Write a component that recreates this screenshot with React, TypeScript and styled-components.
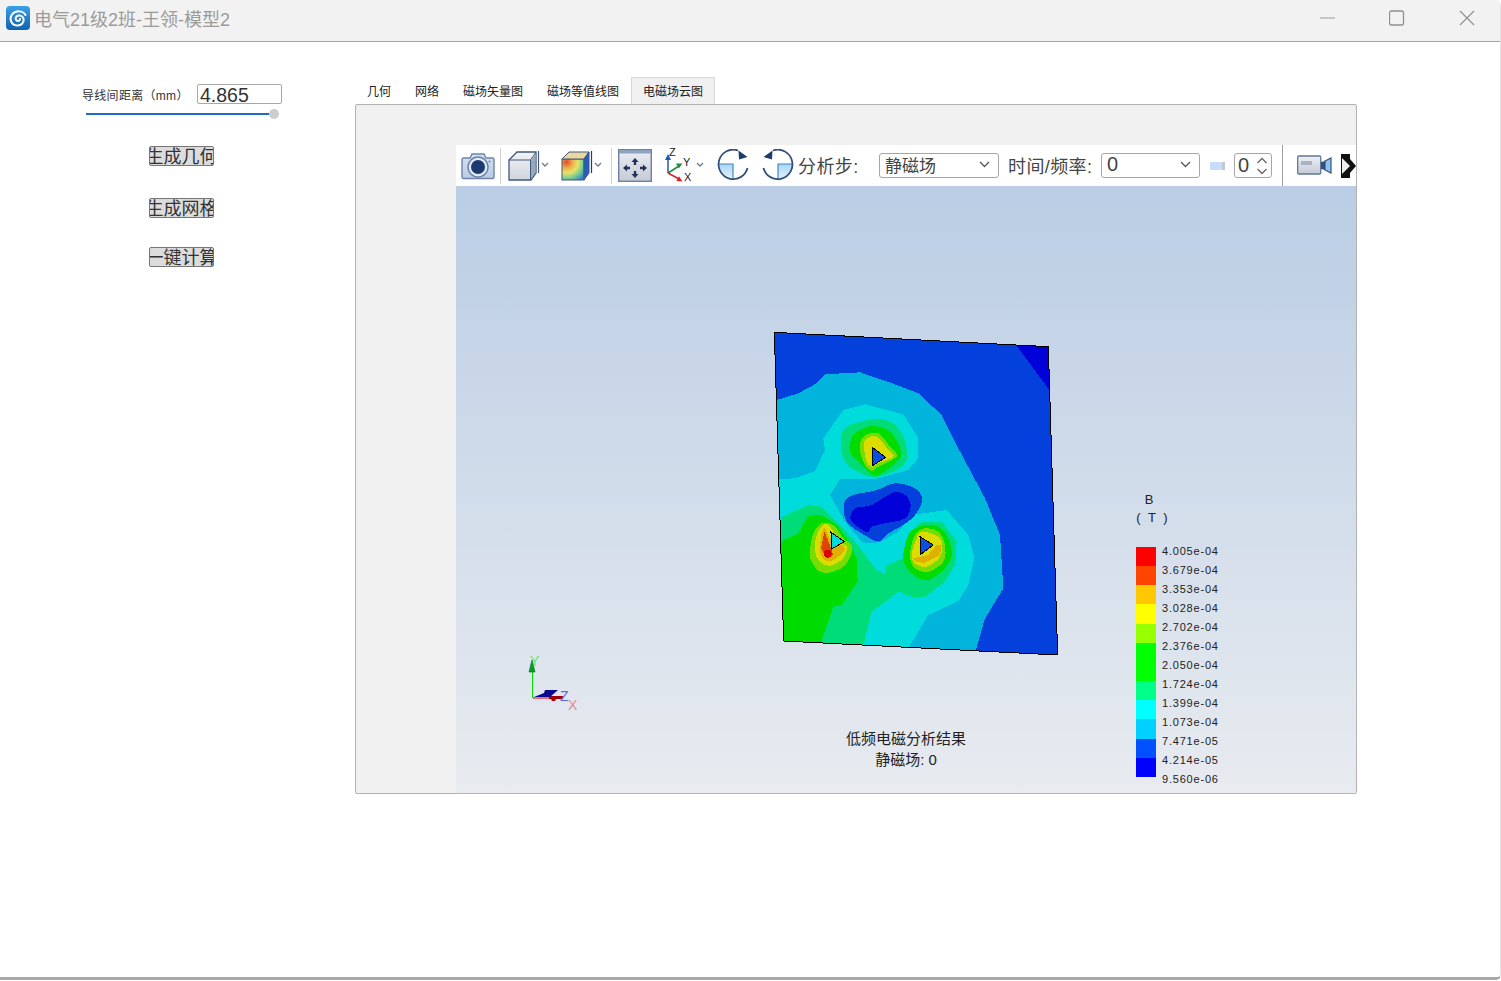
import React from 'react';
import styled, { createGlobalStyle } from 'styled-components';

const ui = '"Liberation Sans", "Noto Sans CJK SC", sans-serif';

const GlobalStyle = createGlobalStyle`
  html, body {
    margin: 0;
    padding: 0;
    background: #fff;
    overflow: hidden;
  }
  * {
    box-sizing: border-box;
  }
`;

const Window = styled.div`
  height: 980px;
  display: flex;
  flex-direction: column;
  font-family: ${ui};
  background: #fff;
  border-bottom: 3px solid #a8a8a8;
  border-right: 1px solid #e4e4e4;
  border-radius: 0 6px 5px 0;
  overflow: hidden;
`;

const TitleBar = styled.header`
  height: 42px;
  flex: none;
  display: flex;
  align-items: center;
  padding: 0 25px 5px 6px;
  background: #f2f2f2;
  border-bottom: 1px solid #a3a3a3;
`;

const Title = styled.h1`
  margin: -1px 0 0 4px;
  font-size: 18px;
  font-weight: 400;
  color: #9a9a9a;
  flex: 1;
  white-space: nowrap;
`;

const WinControls = styled.div`
  display: flex;
  align-items: center;
  gap: 54px;
`;

const Main = styled.main`
  flex: 1;
  display: flex;
  min-height: 0;
`;

const SidePanel = styled.aside`
  width: 355px;
  flex: none;
  padding: 42px 0 0 82px;
`;

const ParamRow = styled.div`
  display: flex;
  align-items: center;
  height: 20px;
`;

const ParamLabel = styled.label`
  width: 115px;
  font-size: 12px;
  letter-spacing: 0.3px;
  color: #333;
  white-space: nowrap;
`;

const ParamInput = styled.input`
  width: 85px;
  height: 20px;
  padding: 2px 0 0 2px;
  border: 1px solid #a8a8a8;
  border-radius: 2px;
  font: 19.5px ${ui};
  color: #333;
  background: #fff;
  outline: none;
`;

const SliderTrack = styled.div`
  position: relative;
  width: 188px;
  height: 2px;
  margin: 9px 0 0 4px;
  background: #1b6ec2;
`;

const SliderKnob = styled.span`
  position: absolute;
  right: -5px;
  top: -4px;
  width: 10px;
  height: 10px;
  border-radius: 50%;
  background: #cdcdcd;
`;

const ActionStack = styled.div`
  display: flex;
  flex-direction: column;
  align-items: flex-start;
  margin-left: 67px;
`;

const ActionButton = styled.button<{ $top: number }>`
  width: 65px;
  height: 20px;
  margin-top: ${(p) => p.$top}px;
  padding: 1px 0 0;
  display: flex;
  justify-content: center;
  align-items: center;
  overflow: hidden;
  white-space: nowrap;
  font: 18px ${ui};
  line-height: 18px;
  color: #333;
  background: #dcdcdc;
  border: 1px solid #777;
  border-radius: 2px;
`;

const Workspace = styled.section`
  flex: none;
  width: 1002px;
  padding-top: 35px;
`;

const TabBar = styled.nav`
  display: flex;
  height: 27px;
`;

const Tab = styled.div<{ $active?: boolean }>`
  padding: 0 11px 2px;
  display: flex;
  align-items: center;
  font-size: 12px;
  color: #222;
  background: ${(p) => (p.$active ? '#f0f0f0' : 'transparent')};
  border: 1px solid ${(p) => (p.$active ? '#d8d8d8' : 'transparent')};
  border-width: 1px 1px 0;
`;

const TabPanel = styled.div`
  height: 690px;
  padding: 40px 0 0 100px;
  background: #f0f0f0;
  border: 1px solid #b2b2b2;
  border-radius: 2px;
`;

const Viewer = styled.div`
  height: 648px;
  display: flex;
  flex-direction: column;
`;

const Toolbar = styled.div`
  height: 41px;
  flex: none;
  display: flex;
  align-items: center;
  background: #fff;
  overflow: hidden;
  font-size: 18px;
  color: #444;
`;

const ToolSlot = styled.div<{ $ml: number; $w: number }>`
  flex: none;
  display: flex;
  margin-left: ${(p) => p.$ml}px;
  width: ${(p) => p.$w}px;
`;

const ToolDivider = styled.span<{ $ml: number; $tall?: boolean }>`
  flex: none;
  width: 1px;
  height: ${(p) => (p.$tall ? 41 : 36)}px;
  margin-left: ${(p) => p.$ml}px;
  background: ${(p) => (p.$tall ? '#a0a0a0' : '#cfcfcf')};
`;

const ToolLabel = styled.span<{ $ml: number; $w: number }>`
  flex: none;
  margin-left: ${(p) => p.$ml}px;
  margin-top: -2px;
  width: ${(p) => p.$w}px;
  letter-spacing: 0.4px;
  white-space: nowrap;
`;

const Combo = styled.div<{ $ml: number; $w: number }>`
  flex: none;
  display: flex;
  align-items: center;
  justify-content: space-between;
  height: 25px;
  margin-left: ${(p) => p.$ml}px;
  width: ${(p) => p.$w}px;
  padding: 0 8px 2px 5px;
  border: 1px solid #a6a6a6;
  border-radius: 3px;
  font-size: 17px;
  color: #444;
  background: #fff;
`;

const NumberText = styled.span`
  font-size: 20px;
`;

const Spin = styled(Combo)`
  padding: 0 3px 0 3px;
`;

const Thumb = styled.span`
  flex: none;
  width: 15px;
  height: 8px;
  margin-left: 10px;
  background: linear-gradient(90deg, #c9ddf8 82%, #c4c8ce 82%);
`;

const Canvas = styled.div`
  position: relative;
  flex: 1;
  background: linear-gradient(#bacde4, #e8ebf0);
  overflow: hidden;
`;

const PlateSvg = styled.svg`
  position: absolute;
  left: 309px;
  top: 139px;
  width: 300px;
  height: 340px;
`;

const TriadSvg = styled.svg`
  position: absolute;
  left: 54px;
  top: 454px;
  width: 90px;
  height: 80px;
`;

const LegendTitle = styled.div`
  position: absolute;
  left: 672px;
  top: 305px;
  width: 50px;
  text-align: center;
  font-size: 13px;
  line-height: 18px;
  letter-spacing: 2px;
  color: #222;
  white-space: pre;
`;

const Legend = styled.div`
  position: absolute;
  left: 680px;
  top: 361px;
  display: flex;
  gap: 6px;
`;

const LegendBar = styled.div`
  width: 20px;
  display: flex;
  flex-direction: column;
`;

const LegendCell = styled.span<{ $color: string }>`
  height: 19.17px;
  background: ${(p) => p.$color};
`;

const LegendLabels = styled.div`
  display: flex;
  flex-direction: column;
  margin-top: -3px;
`;

const LegendLabel = styled.span`
  height: 19px;
  line-height: 14px;
  font-size: 11px;
  letter-spacing: 0.8px;
  color: #222;
`;

const Caption = styled.div`
  position: absolute;
  left: 300px;
  top: 543px;
  width: 300px;
  text-align: center;
  font-size: 15px;
  line-height: 20.5px;
  color: #222;
`;

const SwirlLogo = () => (
  <svg width="24" height="24" viewBox="0 0 24 24">
    <defs>
      <linearGradient id="logoBg" x1="0" y1="0" x2="0" y2="1">
        <stop offset="0" stopColor="#3aa0e8" />
        <stop offset="1" stopColor="#0f62b0" />
      </linearGradient>
    </defs>
    <rect width="24" height="24" rx="4" fill="url(#logoBg)" />
    <path
      d="M19.500 9C17 4.500 9.500 4 6 8.500C3 12.500 5 19 11 19.500C15.500 20 18.500 16 17.500 12.500C16.500 9.500 12.500 8.500 10.500 10.500C9 12 9.500 14.500 11.500 15C13 15.300 14 14.200 14 13"
      fill="none"
      stroke="#fff"
      strokeWidth="2"
      strokeLinecap="round"
    />
  </svg>
);

const MinimizeIcon = () => (
  <svg width="16" height="16" viewBox="0 0 16 16">
    <path d="M1 8h15" stroke="#9a9a9a" strokeWidth="1" />
  </svg>
);

const MaximizeIcon = () => (
  <svg width="16" height="16" viewBox="0 0 16 16">
    <rect x="0.500" y="1" width="14" height="14" rx="2" fill="none" stroke="#8e8e8e" strokeWidth="1.300" />
  </svg>
);

const CloseIcon = () => (
  <svg width="16" height="16" viewBox="0 0 16 16">
    <path d="M1 1l14 14M15 1L1 15" stroke="#8e8e8e" strokeWidth="1.100" />
  </svg>
);

const CameraIcon = () => (
  <svg width="34" height="28" viewBox="0 0 34 28">
    <defs>
      <linearGradient id="camBody" x1="0" y1="0" x2="0" y2="1">
        <stop offset="0" stopColor="#d6e2f2" />
        <stop offset="1" stopColor="#b9cbe4" />
      </linearGradient>
    </defs>
    <path
      d="M2.500 6H9l2-4h12l2 4h6.500A1.500 1.500 0 0 1 33 7.500V25a1.500 1.500 0 0 1-1.500 1.500h-29A1.500 1.500 0 0 1 1 25V7.500A1.500 1.500 0 0 1 2.500 6z"
      fill="url(#camBody)"
      stroke="#6d84a6"
      strokeWidth="1.400"
    />
    <circle cx="17" cy="15" r="10" fill="#e3ebf6" stroke="#6d84a6" strokeWidth="1.500" />
    <circle cx="17" cy="15" r="7" fill="#1c3a70" />
    <circle cx="28.500" cy="9.500" r="1" fill="#6d84a6" />
  </svg>
);

const Chevron = ({ x, y }: { x: number; y: number }) => (
  <path d={`M${x} ${y}l3 3 3-3`} fill="none" stroke="#6b7a90" strokeWidth="1.300" />
);

const CubeIcon = () => (
  <svg width="44" height="32" viewBox="0 0 44 32">
    <defs>
      <linearGradient id="cubeFace" x1="0" y1="0" x2="0" y2="1">
        <stop offset="0" stopColor="#f2f3f6" />
        <stop offset="1" stopColor="#cfd3db" />
      </linearGradient>
    </defs>
    <path d="M1 10L9 2h19v21l-5 7H1z" fill="url(#cubeFace)" stroke="#42587c" strokeWidth="1.300" />
    <path d="M22.500 10H1M22.500 10L28 2M22.500 10v20" stroke="#42587c" strokeWidth="1" fill="none" />
    <path d="M23 10.500L27.500 4v19L23 29z" fill="#9aa6ba" />
    <path d="M30.500 1v22" stroke="#42587c" strokeWidth="1.200" />
    <Chevron x={34} y={13} />
  </svg>
);

const ColorCubeIcon = () => (
  <svg width="44" height="32" viewBox="0 0 44 32">
    <defs>
      <radialGradient id="heat" cx="0.2" cy="0.15" r="1.050">
        <stop offset="0" stopColor="#e04a30" />
        <stop offset="0.28" stopColor="#eeb24a" />
        <stop offset="0.5" stopColor="#e8e26a" />
        <stop offset="0.72" stopColor="#7ed08a" />
        <stop offset="1" stopColor="#2f7fd0" />
      </radialGradient>
    </defs>
    <rect x="1" y="9" width="22" height="21" fill="url(#heat)" stroke="#42587c" strokeWidth="1" />
    <path d="M1 9l7-7h20l-5 7z" fill="#e8d8a0" stroke="#42587c" strokeWidth="1" />
    <path d="M23 9l5-7v21l-5 7z" fill="#1f5fc4" stroke="#42587c" strokeWidth="1" />
    <path d="M30.500 1v22" stroke="#1c3a9a" strokeWidth="1.200" />
    <Chevron x={34} y={13} />
  </svg>
);

const FitIcon = () => (
  <svg width="34" height="33" viewBox="0 0 34 33">
    <defs>
      <linearGradient id="fitBg" x1="0" y1="0" x2="0" y2="1">
        <stop offset="0" stopColor="#eceef3" />
        <stop offset="1" stopColor="#c6cad6" />
      </linearGradient>
    </defs>
    <rect x="0.700" y="0.700" width="32.600" height="31.600" fill="url(#fitBg)" stroke="#6a80a2" strokeWidth="1.400" />
    <rect x="1" y="1" width="32" height="3.500" fill="#8ea2c0" />
    <path
      d="M17 9l-3.500 4h2.300v3h2.400v-3h2.300zM17 29l-3.500-4h2.300v-3h2.400v3h2.300zM5 19l4-3.500v2.300h3v2.400H9v2.300zM29 19l-4-3.500v2.300h-3v2.400h3v2.300z"
      fill="#1d3358"
    />
  </svg>
);

const AxesIcon = () => (
  <svg width="40" height="36" viewBox="0 0 40 36">
    <path d="M3 25V10" stroke="#2058b8" strokeWidth="1.500" />
    <path d="M3 6L0 12h6z" fill="#2058b8" />
    <path d="M3 25l11-7" stroke="#1f8f3c" strokeWidth="1.500" />
    <path d="M17.500 15.500l-6.500 0 2.800 5z" fill="#1f8f3c" />
    <path d="M3 25l11 6" stroke="#d8202c" strokeWidth="1.500" />
    <path d="M17.500 33.500l-6-.5 2.500-4.800z" fill="#d8202c" />
    <text x="4" y="8" fontSize="11" fontFamily={ui} fill="#222">Z</text>
    <text x="18" y="18" fontSize="11" fontFamily={ui} fill="#222">Y</text>
    <text x="19" y="33" fontSize="11" fontFamily={ui} fill="#222">X</text>
    <Chevron x={32} y={15} />
  </svg>
);

const RotateIcon = ({ flip }: { flip?: boolean }) => (
  <svg width="33" height="33" viewBox="0 0 33 33" style={flip ? { transform: 'scaleX(-1)' } : undefined}>
    <defs>
      <linearGradient id="quad" x1="0" y1="0" x2="0" y2="1">
        <stop offset="0" stopColor="#a8d6f4" />
        <stop offset="1" stopColor="#e2f2fb" />
      </linearGradient>
    </defs>
    <path d="M1.300 15H16v14.700A14.700 14.700 0 0 1 1.300 15z" fill="url(#quad)" />
    <path d="M1.300 15H16v14.700" fill="none" stroke="#3f88c4" strokeWidth="1.200" />
    <path d="M21 1.500A14.700 14.700 0 1 0 30.500 19" fill="none" stroke="#34507a" strokeWidth="1.800" />
    <path d="M21.500 1.500l9 6.500-8.500 2.500z" fill="#1f3c6c" />
  </svg>
);

const SmallChevron = () => (
  <svg width="11" height="7" viewBox="0 0 11 7">
    <path d="M1 1l4.500 4.500L10 1" fill="none" stroke="#555" strokeWidth="1.300" />
  </svg>
);

const SpinArrows = () => (
  <svg width="12" height="20" viewBox="0 0 12 20">
    <path d="M1.500 7L6 2.500 10.500 7M1.500 13L6 17.500 10.500 13" fill="none" stroke="#666" strokeWidth="1.300" />
  </svg>
);

const VideoIcon = () => (
  <svg width="35" height="21" viewBox="0 0 35 21">
    <defs>
      <linearGradient id="vid" x1="0" y1="0" x2="0" y2="1">
        <stop offset="0" stopColor="#eef0f4" />
        <stop offset="1" stopColor="#c4cad6" />
      </linearGradient>
    </defs>
    <rect x="0.700" y="1" width="23" height="18" rx="1" fill="url(#vid)" stroke="#5f7698" strokeWidth="1.300" />
    <rect x="4" y="6" width="11" height="4" fill="#a8b2c2" />
    <path d="M24 7l4-1v9l-4-1z" fill="#34507a" />
    <path d="M28 6l6-3v15l-6-3z" fill="#8cc4ec" stroke="#34507a" strokeWidth="1.200" />
  </svg>
);

const ClippedIcon = () => (
  <svg width="15" height="24" viewBox="0 0 15 24">
    <path d="M0 0h9v5l6 7-6 7v5H0z" fill="#111" />
    <path d="M1 4l8 8-8 8z" fill="#eee" />
  </svg>
);

const poly = (pts: number[][]) => pts.map((p) => p.join(',')).join(' ');

// closed catmull-rom through the points, the contour blobs are round in the plot
const blob = (pts: number[][]) => {
  const n = pts.length;
  let d = `M${pts[0][0]} ${pts[0][1]}`;
  for (let i = 0; i < n; i++) {
    const p0 = pts[(i - 1 + n) % n];
    const p1 = pts[i];
    const p2 = pts[(i + 1) % n];
    const p3 = pts[(i + 2) % n];
    const c1x = p1[0] + (p2[0] - p0[0]) / 6;
    const c1y = p1[1] + (p2[1] - p0[1]) / 6;
    const c2x = p2[0] - (p3[0] - p1[0]) / 6;
    const c2y = p2[1] - (p3[1] - p1[1]) / 6;
    d += `C${c1x} ${c1y} ${c2x} ${c2y} ${p2[0]} ${p2[1]}`;
  }
  return `${d}Z`;
};

const c = {
  royal: '#0340dc',
  deep: '#0000d8',
  sky: '#00b4dc',
  aqua: '#00dcdc',
  teal: '#00dc78',
  green: '#00dc00',
  lime: '#78dc00',
  yellow: '#dcdc00',
  amber: '#e0b000',
  orange: '#e04400',
  red: '#dc0000',
};

const bands: { fill: string; pts: number[][]; round?: boolean }[] = [
  { fill: c.deep, pts: [[755, 62], [850, 65], [853, 195]] },
  { fill: c.sky, pts: [[35, 225], [100, 205], [155, 175], [180, 148], [285, 142], [390, 178], [460, 205], [530, 270], [580, 370], [660, 520], [705, 630], [715, 790], [660, 880], [632, 977], [56, 948]] },
  { fill: c.aqua, pts: [[42, 462], [90, 460], [150, 438], [180, 375], [175, 340], [235, 255], [300, 238], [415, 268], [460, 340], [460, 400], [430, 435], [330, 462], [225, 462], [195, 510], [240, 590], [295, 655], [345, 652], [400, 620], [440, 570], [545, 555], [610, 630], [628, 700], [610, 780], [580, 828], [490, 870], [432, 966], [56, 948]] },
  { fill: c.royal, round: true, pts: [[237, 535], [265, 510], [330, 497], [390, 475], [450, 490], [472, 525], [450, 570], [415, 600], [370, 625], [340, 650], [290, 625], [245, 590]] },
  { fill: c.deep, round: true, pts: [[258, 585], [270, 550], [320, 540], [385, 502], [420, 510], [437, 540], [420, 580], [360, 595], [320, 605], [305, 622]] },
  { fill: c.teal, pts: [[48, 578], [130, 540], [170, 545], [215, 590], [270, 650], [300, 690], [335, 735], [360, 748], [365, 722], [415, 700], [430, 625], [470, 590], [530, 590], [575, 650], [570, 720], [540, 770], [480, 815], [440, 815], [400, 800], [320, 860], [295, 961], [168, 952], [56, 948]] },
  { fill: c.green, pts: [[48, 650], [100, 625], [130, 572], [170, 570], [215, 600], [245, 640], [275, 700], [278, 770], [230, 840], [205, 845], [168, 952], [56, 948]] },
  { fill: c.lime, round: true, pts: [[135, 680], [145, 625], [170, 595], [205, 600], [235, 640], [262, 665], [245, 715], [205, 740], [165, 740], [140, 710]] },
  { fill: c.yellow, round: true, pts: [[150, 680], [155, 630], [175, 600], [195, 605], [225, 650], [245, 665], [235, 700], [195, 722], [165, 710]] },
  { fill: c.amber, round: true, pts: [[165, 680], [170, 625], [180, 610], [195, 640], [240, 670], [205, 705], [180, 705]] },
  { fill: c.orange, pts: [[168, 670], [178, 620], [195, 660], [205, 690], [185, 700]] },
  { fill: c.teal, round: true, pts: [[228, 340], [255, 300], [350, 282], [400, 310], [425, 370], [415, 420], [340, 455], [290, 445], [240, 410]] },
  { fill: c.green, round: true, pts: [[255, 380], [265, 330], [310, 305], [360, 310], [395, 345], [408, 390], [385, 420], [330, 452], [290, 420]] },
  { fill: c.lime, round: true, pts: [[285, 375], [295, 335], [340, 325], [375, 365], [395, 395], [340, 425], [320, 438], [300, 420]] },
  { fill: c.yellow, round: true, pts: [[298, 375], [300, 345], [335, 335], [370, 375], [385, 395], [340, 415], [320, 425], [305, 410]] },
  { fill: c.green, round: true, pts: [[415, 705], [430, 630], [470, 603], [520, 605], [550, 640], [560, 690], [540, 730], [490, 765], [445, 750]] },
  { fill: c.lime, round: true, pts: [[435, 690], [450, 630], [480, 610], [520, 620], [540, 660], [535, 710], [490, 740], [450, 730]] },
  { fill: c.yellow, round: true, pts: [[440, 690], [455, 640], [470, 620], [510, 630], [530, 650], [525, 695], [485, 725], [450, 715]] },
  { fill: c.amber, pts: [[445, 700], [490, 690], [515, 660], [530, 660], [525, 690], [480, 713], [455, 712]] },
];

const ContourPlate = () => (
  <PlateSvg viewBox="0 0 900 1020" shapeRendering="crispEdges">
    <polygon points={poly([[28, 22], [850, 65], [878, 990], [56, 948]])} fill={c.royal} />
    {bands.map((b, i) =>
      b.round ? (
        <path key={i} d={blob(b.pts)} fill={b.fill} />
      ) : (
        <polygon key={i} points={poly(b.pts)} fill={b.fill} />
      ),
    )}
    <circle cx="188" cy="686" r="12" fill={c.red} />
    <polygon points={poly([[28, 22], [850, 65], [878, 990], [56, 948]])} fill="none" stroke="#000" strokeWidth="3" />
    <polygon points={poly([[198, 622], [238, 650], [200, 672]])} fill={c.aqua} stroke="#000" strokeWidth="3" />
    <polygon points={poly([[322, 367], [362, 397], [324, 421]])} fill="#0a50e0" stroke="#000" strokeWidth="3" />
    <polygon points={poly([[465, 635], [505, 660], [467, 688]])} fill="#0a50e0" stroke="#000" strokeWidth="3" />
  </PlateSvg>
);

const Triad = () => (
  <TriadSvg viewBox="0 0 90 80">
    <path d="M22.500 58V30" stroke="#00e000" strokeWidth="1" />
    <path d="M22 20l-3 12h6z" fill="#00a020" stroke="#063" strokeWidth="0.600" />
    <path d="M23 58h29" stroke="#e00000" strokeWidth="1" />
    <path d="M39 56h14v3H46l-1 2h-3l-1-2h-2z" fill="#a00000" />
    <path d="M24 57l10-4 1-3h13l-8 7z" fill="#0a0a90" />
    <text x="20" y="26" fontSize="14" fontFamily={ui} fill="#66e866">Y</text>
    <text x="50" y="61" fontSize="14" fontFamily={ui} fill="#5a6ae8">Z</text>
    <text x="58" y="70" fontSize="14" fontFamily={ui} fill="#e88a90">X</text>
  </TriadSvg>
);

const legendColors = [
  '#ff0000', '#ff4400', '#ffc800', '#ffff00', '#96ff00', '#00ff00',
  '#00ff00', '#00ff88', '#00ffff', '#00d0ff', '#0050ff', '#0000ff',
];

const legendValues = [
  '4.005e-04', '3.679e-04', '3.353e-04', '3.028e-04', '2.702e-04', '2.376e-04', '2.050e-04',
  '1.724e-04', '1.399e-04', '1.073e-04', '7.471e-05', '4.214e-05', '9.560e-06',
];

const tabs = ['几何', '网络', '磁场矢量图', '磁场等值线图', '电磁场云图'];

export default function App() {
  return (
    <Window>
      <GlobalStyle />
      <TitleBar>
        <SwirlLogo />
        <Title>电气21级2班-王领-模型2</Title>
        <WinControls>
          <MinimizeIcon />
          <MaximizeIcon />
          <CloseIcon />
        </WinControls>
      </TitleBar>
      <Main>
        <SidePanel>
          <ParamRow>
            <ParamLabel>导线间距离（mm）</ParamLabel>
            <ParamInput readOnly value="4.865" />
          </ParamRow>
          <SliderTrack>
            <SliderKnob />
          </SliderTrack>
          <ActionStack>
            <ActionButton $top={31}>生成几何</ActionButton>
            <ActionButton $top={32}>生成网格</ActionButton>
            <ActionButton $top={29}>一键计算</ActionButton>
          </ActionStack>
        </SidePanel>
        <Workspace>
          <TabBar>
            {tabs.map((t, i) => (
              <Tab key={t} $active={i === tabs.length - 1}>{t}</Tab>
            ))}
          </TabBar>
          <TabPanel>
            <Viewer>
              <Toolbar>
                <ToolSlot $ml={5} $w={34}><CameraIcon /></ToolSlot>
                <ToolDivider $ml={5} />
                <ToolSlot $ml={7} $w={44}><CubeIcon /></ToolSlot>
                <ToolSlot $ml={9} $w={44}><ColorCubeIcon /></ToolSlot>
                <ToolDivider $ml={6} />
                <ToolSlot $ml={6} $w={34}><FitIcon /></ToolSlot>
                <ToolSlot $ml={13} $w={40}><AxesIcon /></ToolSlot>
                <ToolSlot $ml={12} $w={33}><RotateIcon /></ToolSlot>
                <ToolSlot $ml={11} $w={33}><RotateIcon flip /></ToolSlot>
                <ToolLabel $ml={4} $w={81}>分析步:</ToolLabel>
                <Combo $ml={0} $w={120}>静磁场<SmallChevron /></Combo>
                <ToolLabel $ml={9} $w={84}>时间/频率:</ToolLabel>
                <Combo $ml={9} $w={99}><NumberText>0</NumberText><SmallChevron /></Combo>
                <Thumb />
                <Spin $ml={9} $w={38}><NumberText>0</NumberText><SpinArrows /></Spin>
                <ToolDivider $ml={10} $tall />
                <ToolSlot $ml={14} $w={35}><VideoIcon /></ToolSlot>
                <ToolSlot $ml={9} $w={15}><ClippedIcon /></ToolSlot>
              </Toolbar>
              <Canvas>
                <ContourPlate />
                <Triad />
                <LegendTitle>{'B \n( T )'}</LegendTitle>
                <Legend>
                  <LegendBar>
                    {legendColors.map((col, i) => (
                      <LegendCell key={i} $color={col} />
                    ))}
                  </LegendBar>
                  <LegendLabels>
                    {legendValues.map((v) => (
                      <LegendLabel key={v}>{v}</LegendLabel>
                    ))}
                  </LegendLabels>
                </Legend>
                <Caption>
                  低频电磁分析结果
                  <br />
                  静磁场: 0
                </Caption>
              </Canvas>
            </Viewer>
          </TabPanel>
        </Workspace>
      </Main>
    </Window>
  );
}
